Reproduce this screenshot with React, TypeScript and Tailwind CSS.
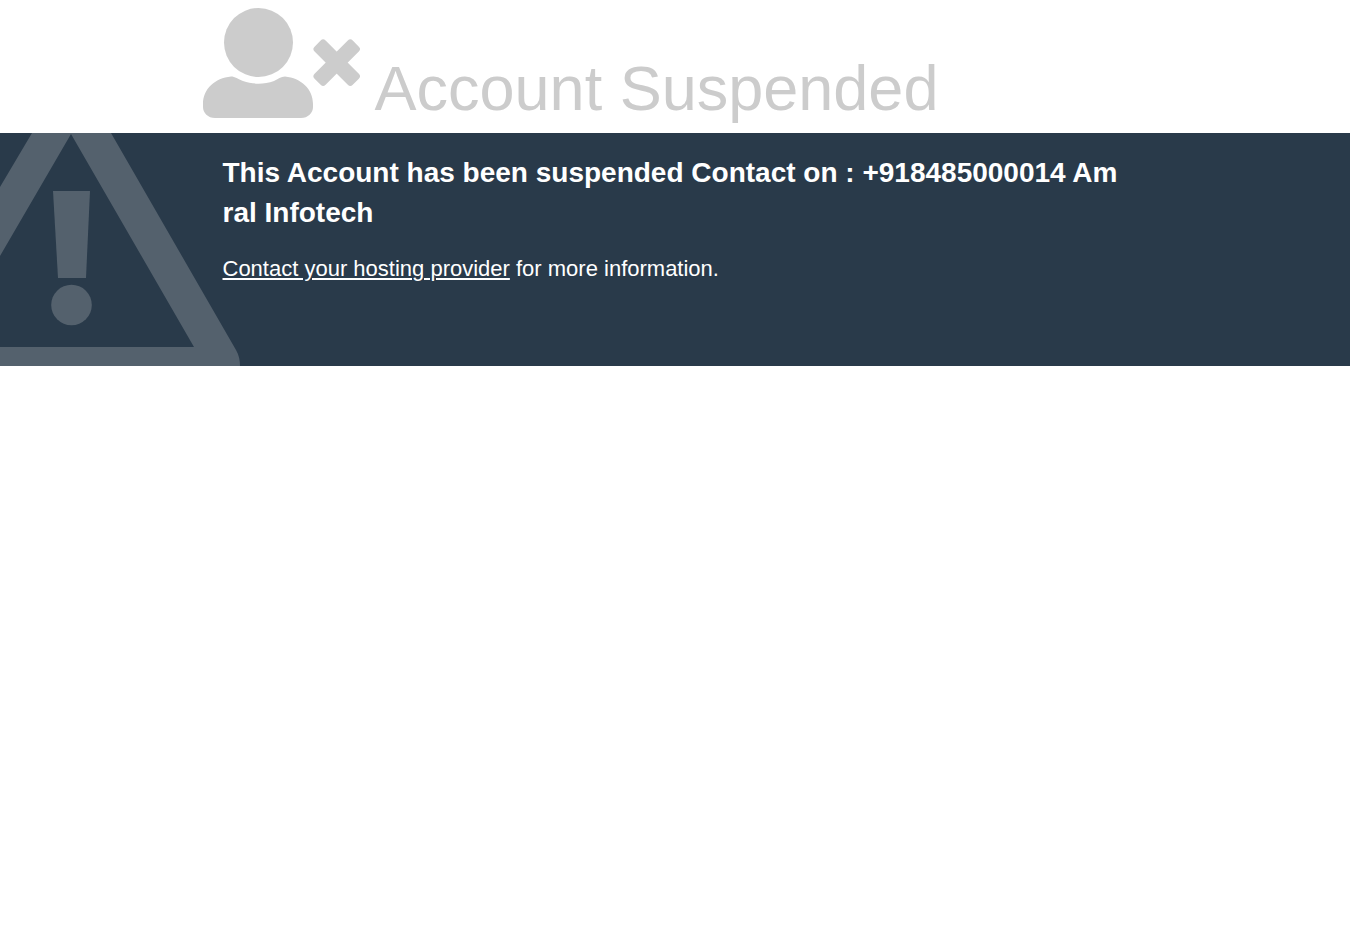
function UserTimesIcon() {
  return (
    <svg viewBox="0 0 158 111" className="h-[111px] w-[158px] shrink-0 fill-current" aria-hidden="true">
      <circle cx="55.5" cy="35.5" r="34.5" />
      <path d="M28 69.500C12 71 0 82 0 97V100C0 106 5 111 12 111H98C105 111 110 106 110 100V97C110 82 98 71 82 69.500C78 69.500 75 72 71 74C61 77.500 50 77.500 40 74C35 72 32 69.500 28 69.500Z" />
      <g transform="translate(133.700 55.700)">
        <rect x="-27" y="-7.800" width="54" height="15.600" rx="3.500" transform="rotate(45)" />
        <rect x="-27" y="-7.800" width="54" height="15.600" rx="3.500" transform="rotate(-45)" />
      </g>
    </svg>
  );
}

function WarningIcon() {
  return (
    <svg
      viewBox="0 0 240 233"
      className="pointer-events-none absolute top-0 left-0 h-[233px] w-60 fill-[#54616d]"
      aria-hidden="true"
    >
      <path d="M32 0H111L236 217Q240 224 240 233H0V214H194L71 1L0 123V54Z" />
      <path d="M53 58H90L86 145H58Z" />
      <circle cx="71.500" cy="172" r="20.300" />
    </svg>
  );
}

export default function App() {
  return (
    <div className="min-h-screen bg-white font-['Liberation_Sans',Arial,sans-serif]">
      <header className="mx-auto flex w-[70%] items-end gap-3.5 pt-[7px] pb-[15px] text-[#ccc]">
        <UserTimesIcon />
        <h1 className="text-[63px] leading-[60px] whitespace-nowrap">Account Suspended</h1>
      </header>
      <main className="relative overflow-hidden bg-[#293a4a] text-white">
        <WarningIcon />
        <section className="relative mx-auto w-[70%] px-5 pt-5 pb-[81px]">
          <h2 className="text-[28px] leading-10 font-bold break-all">
            This Account has been suspended Contact on : +918485000014 Amral Infotech
          </h2>
          <p className="mt-5 text-[22px] leading-8">
            <a href="#" className="underline">Contact your hosting provider</a> for more information.
          </p>
        </section>
      </main>
    </div>
  );
}
